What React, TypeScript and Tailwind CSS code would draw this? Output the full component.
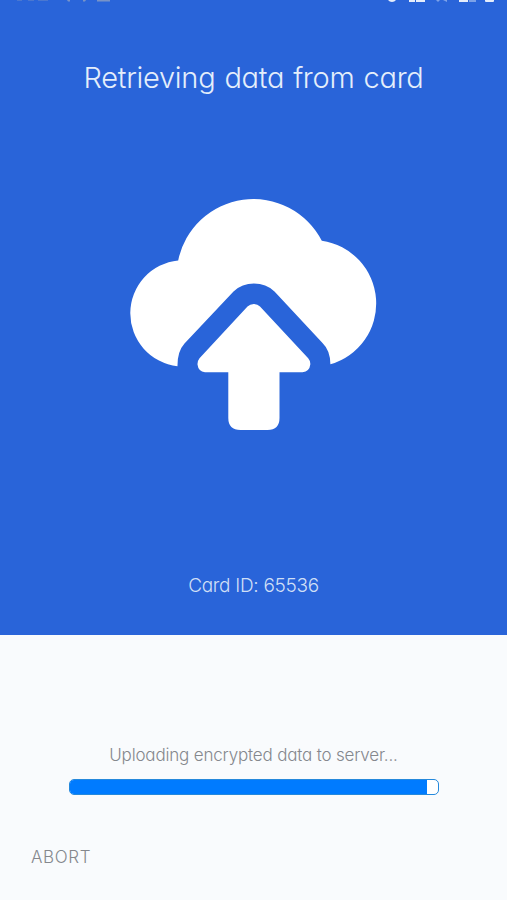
function StatusIcons() {
  return (
    <svg className="block h-3 w-full shrink-0" viewBox="0 0 507 12" aria-hidden="true">
      <g fill="#8198c4">
        <path d="M17 0h5v.7h-5zM28 0h6v.7h-6zM38 0h10v.8H38z" opacity=".5" />
        <path d="M67 0h3v1.5h-2zM83 0h3l-1 1.5h-2zM97 0h13v1.5H97z" opacity=".9" />
      </g>
      <g fill="#e5edfb">
        <path d="M388 0h8q-1.500 2-4 2t-4-2zM409 0h6v2h-6zM416 0h9v2h-9zM459 0h9v2h-9zM485 0h9v1q0 1-1 1h-7q-1 0-1-1z" />
        <path d="M436 0h4l-2 2zM443 0h4v2zM469 0h7v2h-7z" opacity=".45" />
      </g>
    </svg>
  );
}

function CloudUpload() {
  return (
    <svg className="block h-[232px] w-[246px] overflow-visible" viewBox="131 199 246 232" fill="#fff" aria-hidden="true">
      <path d="M178.200 260.400A76.800 76.800 0 0 1 321.800 240.800A63.300 63.300 0 0 1 330.400 364.300Q330.300 350.500 322.500 343L274.500 291.500Q266 283.600 254 283.600T233.500 291.500L184.500 343.500Q177.300 351.500 177.500 366.200A53.200 53.200 0 0 1 178.200 260.400Z" />
      <path d="M247.500 306.500Q250 304 253.800 304T260 306.500L308.200 358.200Q310.600 361 310.300 364.500Q309.500 371.500 302.500 372.200H279.500V418Q279.500 430 267.500 430H240.500Q228.300 430 228.300 418V372.200H205Q198.300 371.500 197.500 364.500Q197.300 361 199.500 358.200Z" />
    </svg>
  );
}

export default function App() {
  return (
    <main className="flex h-[900px] w-[507px] flex-col overflow-hidden bg-[#f9fbfd] font-['Inter',sans-serif] font-[350] [font-feature-settings:'cv11']">
      <section className="flex h-[635px] shrink-0 flex-col items-center bg-[#2964d9]">
        <StatusIcons />
        <h1 className="mt-[46px] h-10 text-[29px] leading-10 font-[320] tracking-[-0.28px] [word-spacing:1.200px] whitespace-nowrap text-[#e4eefb]">
          Retrieving data from card
        </h1>
        <div className="mt-[101px]">
          <CloudUpload />
        </div>
        <p className="mt-[143px] text-[19px] leading-6 tracking-[-0.3px] whitespace-nowrap text-[#cfdff6]">Card ID: 65536</p>
      </section>
      <section className="flex flex-1 flex-col">
        <p className="mt-[108px] text-center text-[17px] leading-6 tracking-[-0.18px] whitespace-nowrap text-[#85888d]">
          Uploading encrypted data to server...
        </p>
        <div className="mt-3 ml-[69px] h-4 w-[370px] overflow-hidden rounded-[5px] border border-[#2589dc] bg-white">
          <div className="h-full w-[357px] bg-[#007bff]" />
        </div>
        <button className="mt-[50px] ml-[31px] self-start text-[17px] leading-6 tracking-[0.65px] text-[#85888d]">ABORT</button>
      </section>
    </main>
  );
}
